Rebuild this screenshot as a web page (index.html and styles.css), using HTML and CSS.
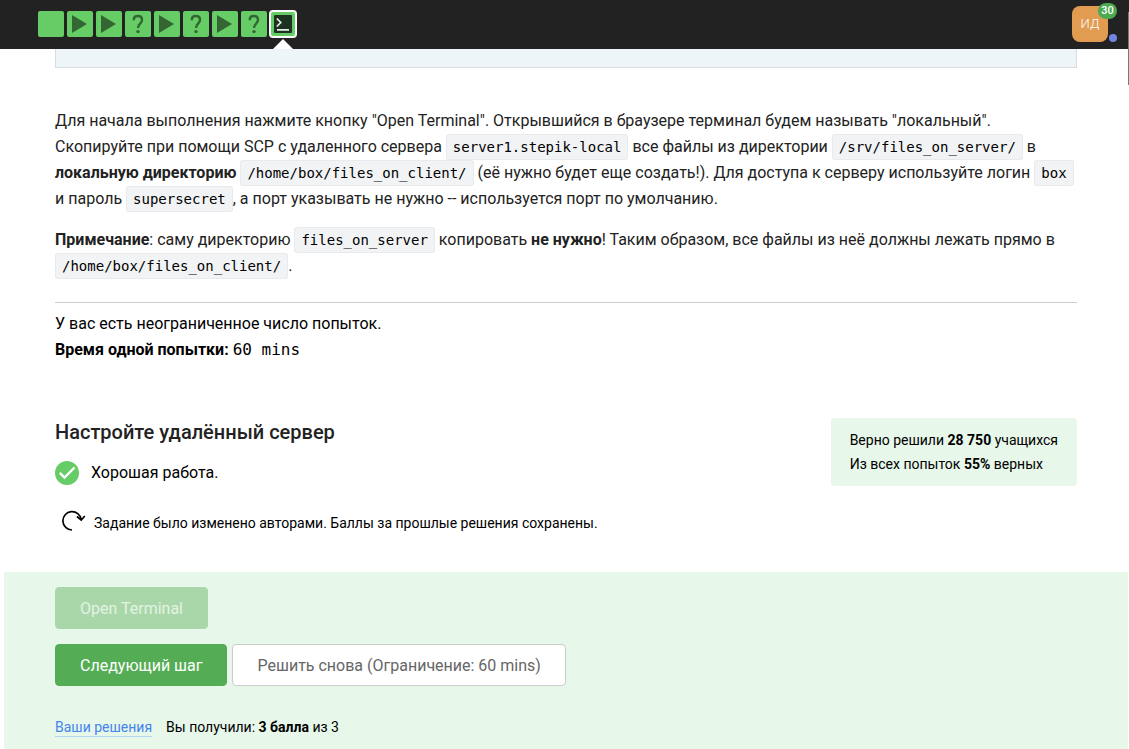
FILE: index.html
```html
<!DOCTYPE html>
<html lang="ru">
<head>
<meta charset="utf-8">
<meta name="viewport" content="width=device-width, initial-scale=1">
<title>Настройте удалённый сервер</title>
<link rel="stylesheet" href="styles.css">
</head>
<body>
<svg class="defs" aria-hidden="true">
  <symbol id="play" viewBox="0 0 26 26"><path d="M5 4 20 13 5 22z" fill="#336633"/></symbol>
  <symbol id="quiz" viewBox="0 0 26 26"><path d="M8.700 9.200C8.700 6.600 10.400 5 12.900 5s4.100 1.500 4.100 3.900c0 3.500-4 3.900-4 8" fill="none" stroke="#336633" stroke-width="2.400"/><circle cx="13" cy="20.600" r="1.700" fill="#336633"/></symbol>
  <symbol id="terminal" viewBox="0 0 26 26"><rect x="4" y="4" width="18" height="18" rx="1" fill="#1b3320"/><path d="M6.800 7.500 10.800 11.500 6.800 15.500M7 18.800H19" fill="none" stroke="#e8eee8" stroke-width="1.700"/></symbol>
</svg>
<header class="topbar">
  <nav class="steps" aria-label="Шаги урока">
    <a class="step" href="#1" aria-label="Шаг 1"></a>
    <a class="step" href="#2" aria-label="Шаг 2"><svg><use href="#play"/></svg></a>
    <a class="step" href="#3" aria-label="Шаг 3"><svg><use href="#play"/></svg></a>
    <a class="step" href="#4" aria-label="Шаг 4"><svg><use href="#quiz"/></svg></a>
    <a class="step" href="#5" aria-label="Шаг 5"><svg><use href="#play"/></svg></a>
    <a class="step" href="#6" aria-label="Шаг 6"><svg><use href="#quiz"/></svg></a>
    <a class="step" href="#7" aria-label="Шаг 7"><svg><use href="#play"/></svg></a>
    <a class="step" href="#8" aria-label="Шаг 8"><svg><use href="#quiz"/></svg></a>
    <a class="step step-active" href="#9" aria-label="Шаг 9" aria-current="step"><svg><use href="#terminal"/></svg></a>
  </nav>
  <button class="avatar" type="button">ИД<span class="badge">30</span><span class="dot"></span></button>
</header>
<main class="page">
  <div class="content">
    <div class="hint"></div>
    <div class="text">
      <p>Для начала выполнения нажмите кнопку "Open Terminal". Открывшийся в браузере терминал будем называть "локальный".<br>
      Скопируйте при помощи SCP с удаленного сервера <code>server1.stepik-local</code> все файлы из директории <code>/srv/files_on_server/</code> в <strong>локальную директорию</strong> <code>/home/box/files_on_client/</code> (её нужно будет еще создать!). Для доступа к серверу используйте логин <code>box</code> и пароль <code>supersecret</code>, а порт указывать не нужно -- используется порт по умолчанию.</p>
      <p><strong>Примечание</strong>: саму директорию <code>files_on_server</code> копировать <strong>не нужно</strong>! Таким образом, все файлы из неё должны лежать прямо в <code>/home/box/files_on_client/</code>.</p>
    </div>
    <div class="limits">
      <div>У вас есть неограниченное число попыток.</div>
      <div><strong>Время одной попытки:</strong> <span class="mono">60 mins</span></div>
    </div>
    <section class="result">
      <div>
        <h2>Настройте удалённый сервер</h2>
        <div class="status">
          <svg width="24" height="24" viewBox="0 0 24 24" aria-hidden="true"><circle cx="12" cy="12" r="12" fill="#66cc66"/><path d="M4.800 11.800 9.500 16.500 19.500 6.500" fill="none" stroke="#fff" stroke-width="2.400"/></svg>
          <span>Хорошая работа.</span>
        </div>
      </div>
      <div class="stats">
        <div>Верно решили <strong>28 750</strong> учащихся</div>
        <div>Из всех попыток <strong>55%</strong> верных</div>
      </div>
    </section>
    <div class="changed">
      <svg width="24" height="22" viewBox="0 0 24 22" aria-hidden="true"><path d="M10 20A9.200 9.200 0 1 1 19.200 9.500M15 6.500 19.200 10 22.800 6" fill="none" stroke="#000" stroke-width="1.700"/></svg>
      <span>Задание было изменено авторами. Баллы за прошлые решения сохранены.</span>
    </div>
  </div>
  <footer class="actions">
    <div class="row"><button class="btn btn-green" type="button" disabled>Open Terminal</button></div>
    <div class="row"><button class="btn btn-green" type="button">Следующий шаг</button><button class="btn btn-white" type="button">Решить снова (Ограничение: 60 mins)</button></div>
    <div class="score"><a href="#solutions">Ваши решения</a><span>Вы получили: <strong>3 балла</strong> из 3</span></div>
  </footer>
</main>
<div class="scroll-thumb"></div>
</body>
</html>
```
FILE: styles.css
```css
* { box-sizing: border-box; }
body {
  margin: 0;
  background: #fff;
  color: #000;
  font: 16px/26px Roboto, "Liberation Sans", sans-serif;
}
.defs { position: absolute; width: 0; height: 0; }
.topbar {
  display: flex;
  align-items: center;
  justify-content: space-between;
  height: 49px;
  padding: 0 21px 1px 38px;
  background: #222;
}
.steps { display: flex; gap: 3px; }
.step {
  position: relative;
  width: 26px;
  height: 26px;
  border-radius: 2px;
  background: #66cc66;
}
.step svg { display: block; width: 26px; height: 26px; }
.step-active {
  border-radius: 3px;
  box-shadow: 0 0 0 1px #fff, inset 0 0 0 1px #fff;
}
.step-active::after {
  content: "";
  position: absolute;
  left: 3px;
  top: 28px;
  border: solid transparent;
  border-width: 0 10px 10px;
  border-bottom-color: #fff;
}
.avatar {
  position: relative;
  width: 36px;
  height: 36px;
  padding: 0;
  border: 0;
  border-radius: 8px;
  background: #e29c52;
  color: #fff;
  font: 300 13px/36px Roboto, sans-serif;
}
.badge {
  position: absolute;
  right: -9px;
  top: -3px;
  width: 19px;
  height: 16px;
  border-radius: 8px;
  background: #4caa50;
  font-size: 11px;
  font-weight: 500;
  line-height: 16px;
}
.dot {
  position: absolute;
  right: -9px;
  bottom: 0;
  width: 8px;
  height: 8px;
  border-radius: 50%;
  background: #7084e4;
}
.page { margin: 0 1px 0 4px; }
.content { padding: 0 51px; }
.hint {
  height: 19px;
  border: 1px solid #d9dcde;
  border-top: 0;
  background: #edf5f9;
}
.text {
  margin-top: 40px;
  padding-bottom: 23px;
  border-bottom: 1px solid #ccc;
  color: #222;
}
p { margin: 0 0 15px; }
p:last-child { margin: 0; }
strong { font-weight: 700; }
code {
  padding: 4px 6px;
  border: 1px solid #e8eaed;
  border-radius: 3px;
  background: #f2f3f5;
  color: #000;
  font: 14px "DejaVu Sans Mono", monospace;
}
.mono { font-family: "DejaVu Sans Mono", monospace; }
.limits { margin-top: 8px; }
.result {
  display: flex;
  align-items: flex-start;
  justify-content: space-between;
  margin-top: 55px;
}
h2 {
  margin: 0 0 14px;
  color: #222;
  font-size: 20px;
  font-weight: 500;
  line-height: 28px;
}
.status { display: flex; align-items: center; gap: 12px; }
.stats {
  padding: 10px 19px;
  border-radius: 4px;
  background: #e7f7e9;
  font-size: 14px;
  line-height: 24px;
}
.changed {
  display: flex;
  align-items: flex-start;
  gap: 8px;
  margin: 24px 0 0 7px;
  font-size: 14px;
}
.actions {
  display: flex;
  flex-direction: column;
  gap: 15px;
  margin-top: 36px;
  padding: 15px 51px 12px;
  background: #e7f7e9;
}
.row { display: flex; gap: 5px; }
.btn {
  height: 42px;
  padding: 0 24px;
  border: 1px solid #54ad54;
  border-radius: 4px;
  font: 16px Roboto, sans-serif;
}
.btn-green { background: #54ad54; color: #fff; }
.btn-green:disabled { border-color: #aad7aa; background: #aad7aa; color: #e1f3e2; }
.btn-white { border-color: #ccc; background: #fff; color: #666; }
.score {
  display: flex;
  gap: 14px;
  margin-top: 18px;
  font-size: 14px;
  line-height: 17px;
}
.score a {
  border-bottom: 1px solid #b5d5f5;
  color: #4485ed;
  text-decoration: none;
}
.scroll-thumb {
  position: fixed;
  right: 0;
  top: 12px;
  width: 1px;
  height: 73px;
  background: #777;
}
```
